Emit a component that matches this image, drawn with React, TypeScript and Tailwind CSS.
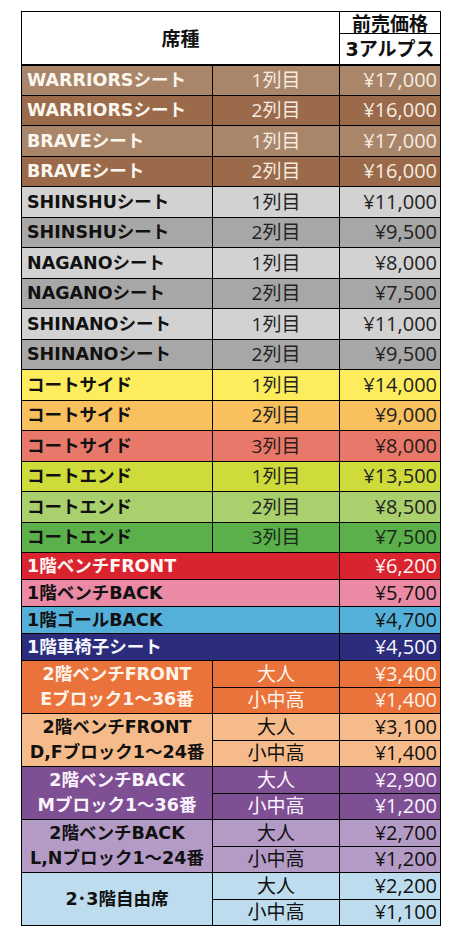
import React from "react";

type Row = { name: string; sub: string; price: string; bg: string; fg: string; sfg: string };

const rows: Row[] = [
  { name: "WARRIORSシート", sub: "1列目", price: "¥17,000", bg: "bg-[#a9866a]", fg: "text-[#fbf6ee]", sfg: "text-[#f6ede2]" },
  { name: "WARRIORSシート", sub: "2列目", price: "¥16,000", bg: "bg-[#9a6a4a]", fg: "text-[#fbf6ee]", sfg: "text-[#f6ede2]" },
  { name: "BRAVEシート", sub: "1列目", price: "¥17,000", bg: "bg-[#a9866a]", fg: "text-[#fbf6ee]", sfg: "text-[#f6ede2]" },
  { name: "BRAVEシート", sub: "2列目", price: "¥16,000", bg: "bg-[#9a6a4a]", fg: "text-[#fbf6ee]", sfg: "text-[#f6ede2]" },
  { name: "SHINSHUシート", sub: "1列目", price: "¥11,000", bg: "bg-[#d2d2d2]", fg: "text-[#111111]", sfg: "text-[#222222]" },
  { name: "SHINSHUシート", sub: "2列目", price: "¥9,500", bg: "bg-[#a7a7a7]", fg: "text-[#111111]", sfg: "text-[#222222]" },
  { name: "NAGANOシート", sub: "1列目", price: "¥8,000", bg: "bg-[#d2d2d2]", fg: "text-[#111111]", sfg: "text-[#222222]" },
  { name: "NAGANOシート", sub: "2列目", price: "¥7,500", bg: "bg-[#a7a7a7]", fg: "text-[#111111]", sfg: "text-[#222222]" },
  { name: "SHINANOシート", sub: "1列目", price: "¥11,000", bg: "bg-[#d2d2d2]", fg: "text-[#111111]", sfg: "text-[#222222]" },
  { name: "SHINANOシート", sub: "2列目", price: "¥9,500", bg: "bg-[#a7a7a7]", fg: "text-[#111111]", sfg: "text-[#222222]" },
  { name: "コートサイド", sub: "1列目", price: "¥14,000", bg: "bg-[#fdec5c]", fg: "text-[#111111]", sfg: "text-[#222222]" },
  { name: "コートサイド", sub: "2列目", price: "¥9,000", bg: "bg-[#f8c15e]", fg: "text-[#111111]", sfg: "text-[#222222]" },
  { name: "コートサイド", sub: "3列目", price: "¥8,000", bg: "bg-[#e8796a]", fg: "text-[#111111]", sfg: "text-[#2a1a18]" },
  { name: "コートエンド", sub: "1列目", price: "¥13,500", bg: "bg-[#cedb3a]", fg: "text-[#111111]", sfg: "text-[#222222]" },
  { name: "コートエンド", sub: "2列目", price: "¥8,500", bg: "bg-[#a9d06c]", fg: "text-[#111111]", sfg: "text-[#222222]" },
  { name: "コートエンド", sub: "3列目", price: "¥7,500", bg: "bg-[#5cb04b]", fg: "text-[#111111]", sfg: "text-[#1a2a18]" },
];

const singles = [
  { name: "1階ベンチFRONT", price: "¥6,200", bg: "bg-[#d92430]", fg: "text-[#fff6f4]" },
  { name: "1階ベンチBACK", price: "¥5,700", bg: "bg-[#ea8aa5]", fg: "text-[#111111]" },
  { name: "1階ゴールBACK", price: "¥4,700", bg: "bg-[#55b0d9]", fg: "text-[#111111]" },
  { name: "1階車椅子シート", price: "¥4,500", bg: "bg-[#2b2c7b]", fg: "text-[#f6f6ff]" },
];

const groups = [
  { l1: "2階ベンチFRONT", l2: "Eブロック1～36番", p1: "¥3,400", p2: "¥1,400", bg: "bg-[#e9733b]", fg: "text-[#fff4ea]" },
  { l1: "2階ベンチFRONT", l2: "D,Fブロック1～24番", p1: "¥3,100", p2: "¥1,400", bg: "bg-[#f6bb8b]", fg: "text-[#111111]" },
  { l1: "2階ベンチBACK", l2: "Mブロック1～36番", p1: "¥2,900", p2: "¥1,200", bg: "bg-[#7e4f92]", fg: "text-[#fbf4ff]" },
  { l1: "2階ベンチBACK", l2: "L,Nブロック1～24番", p1: "¥2,700", p2: "¥1,200", bg: "bg-[#b49bc6]", fg: "text-[#111111]" },
  { l1: "2･3階自由席", l2: "", p1: "¥2,200", p2: "¥1,100", bg: "bg-[#bddced]", fg: "text-[#111111]" },
];

const nameFont = "font-['DejaVu_Sans','Noto_Sans_CJK_JP',sans-serif]";
const regFont = "font-['Open_Sans','Noto_Sans_CJK_JP',sans-serif]";
const cell = "border border-black p-0";

export default function App() {
  return (
    <div className="w-[460px] h-[946px] bg-white pt-[11px] pl-[21px]">
      <table className="border-collapse table-fixed w-[419px]">
        <colgroup>
          <col className="w-[191px]" />
          <col className="w-[127px]" />
          <col className="w-[101px]" />
        </colgroup>
        <tbody>
          <tr className="h-[22px]">
            <td colSpan={2} rowSpan={2} className={`${cell} border-b-2 bg-white text-center text-[19px] font-bold text-[#111] font-['Noto_Sans_CJK_JP',sans-serif]`}>
              席種
            </td>
            <td className={`${cell} bg-white text-center text-[19px] font-bold text-[#111] leading-[21px] font-['Noto_Sans_CJK_JP',sans-serif]`}>
              前売価格
            </td>
          </tr>
          <tr className="h-[31px]">
            <td className={`${cell} border-b-2 bg-white text-center text-[19px] font-bold text-[#111] leading-[28px] ${nameFont}`}>
              3アルプス
            </td>
          </tr>
          {rows.map((r, i) => (
            <tr key={i} className={`h-[30.5px] ${r.bg}`}>
              <td className={`${cell} pl-[5px] text-left text-[17.5px] font-bold leading-[28px] ${r.fg} ${nameFont}`}>{r.name}</td>
              <td className={`${cell} text-center text-[19px] leading-[28px] ${r.sfg} ${regFont}`}>{r.sub}</td>
              <td className={`${cell} pr-[3px] text-right text-[20px] leading-[28px] ${r.sfg} ${regFont}`}>{r.price}</td>
            </tr>
          ))}
          {singles.map((r, i) => (
            <tr key={`s${i}`} className={`h-[27px] ${r.bg}`}>
              <td colSpan={2} className={`${cell} pl-[5px] text-left text-[17.5px] font-bold leading-[24px] ${r.fg} ${nameFont}`}>{r.name}</td>
              <td className={`${cell} pr-[3px] text-right text-[20px] leading-[24px] ${r.fg} ${regFont}`}>{r.price}</td>
            </tr>
          ))}
          {groups.map((g, i) => (
            <React.Fragment key={`g${i}`}>
              <tr className={`h-[26.5px] ${g.bg}`}>
                <td rowSpan={2} className={`${cell} text-center text-[17.5px] font-bold leading-[25px] ${g.fg} ${nameFont}`}>
                  <div>{g.l1}</div>
                  {g.l2 && <div>{g.l2}</div>}
                </td>
                <td className={`${cell} text-center text-[19px] leading-[22px] ${g.fg} ${regFont}`}>大人</td>
                <td className={`${cell} pr-[3px] text-right text-[20px] leading-[22px] ${g.fg} ${regFont}`}>{g.p1}</td>
              </tr>
              <tr className={`h-[26.5px] ${g.bg}`}>
                <td className={`${cell} text-center text-[19px] leading-[22px] ${g.fg} ${regFont}`}>小中高</td>
                <td className={`${cell} pr-[3px] text-right text-[20px] leading-[22px] ${g.fg} ${regFont}`}>{g.p2}</td>
              </tr>
            </React.Fragment>
          ))}
        </tbody>
      </table>
    </div>
  );
}
